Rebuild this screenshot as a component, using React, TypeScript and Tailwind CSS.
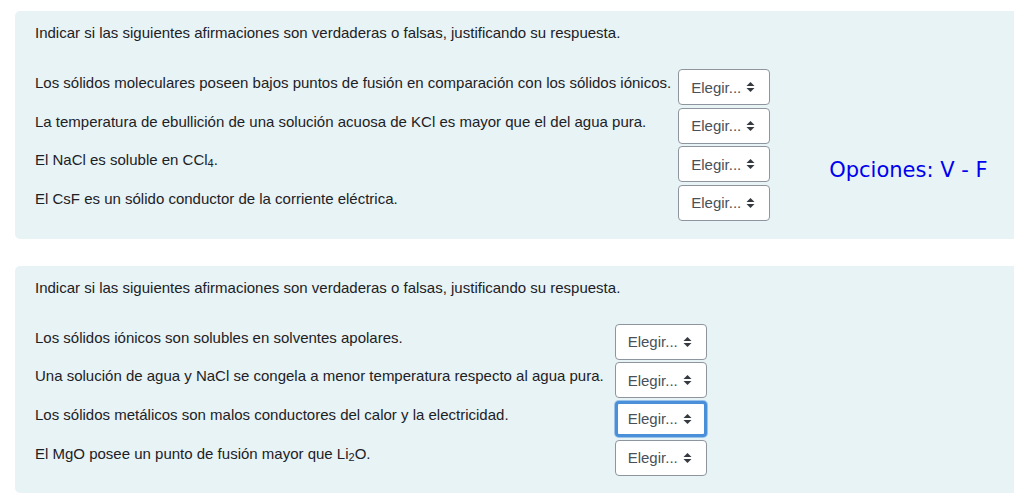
import React from "react";

const statementsA = [
  <>Los sólidos moleculares poseen bajos puntos de fusión en comparación con los sólidos iónicos.</>,
  <>La temperatura de ebullición de una solución acuosa de KCl es mayor que el del agua pura.</>,
  <>El NaCl es soluble en CCl<sub className="text-[11px] align-baseline relative top-[2px]">4</sub>.</>,
  <>El CsF es un sólido conductor de la corriente eléctrica.</>,
];

const statementsB = [
  <>Los sólidos iónicos son solubles en solventes apolares.</>,
  <>Una solución de agua y NaCl se congela a menor temperatura respecto al agua pura.</>,
  <>Los sólidos metálicos son malos conductores del calor y la electricidad.</>,
  <>El MgO posee un punto de fusión mayor que Li<sub className="text-[11px] align-baseline relative top-[2px]">2</sub>O.</>,
];

function Caret() {
  return (
    <svg width="9" height="12" viewBox="0 0 9 12" className="shrink-0">
      <path d="M4.5 1 L8.5 5 H0.5 Z" fill="#343a40" />
      <path d="M4.5 11 L8.5 7 H0.5 Z" fill="#343a40" />
    </svg>
  );
}

function FakeSelect({ focused }: { focused?: boolean }) {
  return (
    <div
      className={`flex items-center gap-[5px] w-[92px] h-[36px] bg-white rounded-[4px] text-[15px] text-[#495057] ${
        focused
          ? "border-[3px] border-[#4a90d9] pl-[10px] shadow-[0_0_0_1px_#9cc3eb]"
          : "border border-[#8f959e] pl-[12px]"
      }`}
    >
      <span className="leading-none">Elegir...</span>
      <Caret />
    </div>
  );
}

function MatchTable({
  items,
  focusIdx,
  gapClass,
}: {
  items: React.ReactNode[];
  focusIdx?: number;
  gapClass: string;
}) {
  return (
    <table className="border-collapse mt-[24.5px]">
      <tbody>
        {items.map((t, i) => (
          <tr key={i} className="h-[38.67px] align-top">
            <td className={`pt-[3px] whitespace-nowrap ${gapClass}`}>{t}</td>
            <td>
              <FakeSelect focused={i === focusIdx} />
            </td>
          </tr>
        ))}
      </tbody>
    </table>
  );
}

function Panel({ children }: { children: React.ReactNode }) {
  return (
    <div className="ml-[15px] w-[1020px] bg-[#e7f3f5] rounded-[5px] pt-[11px] pb-[15px] pl-[20px]">
      {children}
    </div>
  );
}

export default function App() {
  return (
    <div
      className="w-[1014px] h-[504px] overflow-hidden bg-white pt-[11px] text-[15px] leading-[22.5px] text-[#1d2125]"
      style={{ fontFamily: '"Liberation Sans", Arial, sans-serif' }}
    >
      <Panel>
        <p>Indicar si las siguientes afirmaciones son verdaderas o falsas, justificando su respuesta.</p>
        <div className="flex">
          <MatchTable items={statementsA} gapClass="pr-[7px]" />
          <div
            className="ml-[59px] mt-[113px] text-[21px] leading-[24px] text-[#0000ee]"
            style={{ fontFamily: '"DejaVu Sans", sans-serif' }}
          >
            Opciones: V - F
          </div>
        </div>
      </Panel>
      <div className="h-[27px]" />
      <Panel>
        <p>Indicar si las siguientes afirmaciones son verdaderas o falsas, justificando su respuesta.</p>
        <MatchTable items={statementsB} focusIdx={2} gapClass="pr-[11px]" />
      </Panel>
    </div>
  );
}
